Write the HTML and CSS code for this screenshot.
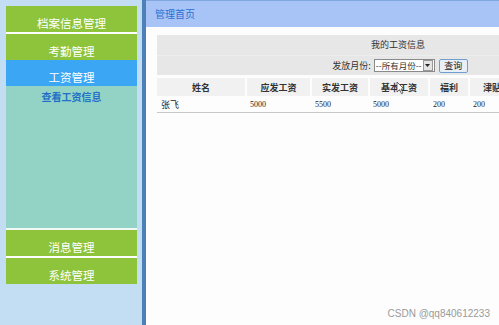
FILE: index.html
```html
<!DOCTYPE html>
<html lang="zh-CN">
<head>
  <meta charset="UTF-8" />
  <title>工资管理</title>
  <link rel="stylesheet" href="styles.css">
</head>
<body>
  <div class="page">
    <!-- Left menu -->
    <div class="sidebar">
      <div class="menu-item sep">档案信息管理</div>
      <div class="menu-item">考勤管理</div>
      <div class="menu-item active">工资管理</div>
      <div class="submenu">
        <a class="sub-link">查看工资信息</a>
      </div>
      <div class="menu-item sep">消息管理</div>
      <div class="menu-item">系统管理</div>
    </div>
    <!-- Main area -->
    <div class="main">
      <div class="main-header">管理首页</div>
      <div class="main-body">
        <div class="panel">
          <div class="panel-title">我的工资信息</div>
          <div class="panel-filter">
            <span class="filter-label">发放月份:</span>
            <span class="select">
              <span class="select-text">--所有月份--</span>
              <span class="select-arrow">
                <svg width="5" height="3" viewBox="0 0 5 3"><path d="M0 0h5L2.5 3z" fill="#222"/></svg>
              </span>
            </span>
            <button class="btn">查询</button>
          </div>
          <table class="grid">
            <tr>
              <th class="c1">姓名</th>
              <th class="c2">应发工资</th>
              <th class="c3">实发工资</th>
              <th class="c4">基本工资</th>
              <th class="c5">福利</th>
              <th class="c6">津贴</th>
              <th class="c7">扣款</th>
              <th class="c8">发放月份</th>
            </tr>
            <tr>
              <td class="name">张飞</td>
              <td>5000</td>
              <td>5500</td>
              <td>5000</td>
              <td>200</td>
              <td>200</td>
              <td>0</td>
              <td>2023-01</td>
            </tr>
          </table>
        </div>
      </div>
    </div>
  </div>
  <!-- mouse pointer -->
  <svg class="cursor" width="9" height="14" viewBox="0 0 9 14">
    <path d="M1 1v10l2.5-2.3 2 4 1.5-.7-2-4H8z" fill="#fff" stroke="#444" stroke-width="0.8"/>
  </svg>
  <div class="watermark">CSDN @qq840612233</div>
</body>
</html>
```

FILE: styles.css
```css
/* Global */
body {
  margin: 0;
  font-family: "Noto Sans CJK SC", "Noto Sans", sans-serif;
  overflow: hidden;
}
.page {
  display: flex;
  height: 325px;
  overflow: hidden;
}
/* Sidebar */
.sidebar {
  flex: 0 0 131px;
  padding: 6px 5px 0 6px;
  background-color: #c3ddf3;
  border-right: 4px solid #4d7fb9;
}
.menu-item {
  height: 26px;
  box-sizing: border-box;
  padding-top: 8px;
  line-height: 18px;
  background-color: #8dc43b;
  color: #fff;
  font-size: 11.5px;
  text-align: center;
  white-space: nowrap;
  overflow: hidden;
}
.menu-item.sep {
  border-bottom: 2px solid #fff;
  height: 28px;
}
.menu-item.active {
  background-color: #3ba6f4;
}
.submenu {
  height: 144px;
  background-color: #93d3c6;
  border-bottom: 2px solid #f2f8f6;
  text-align: center;
  padding-top: 4px;
  box-sizing: border-box;
  font-size: 10px;
  line-height: 14px;
}
.sub-link {
  font-weight: bold;
  color: #1f70c6;
  white-space: nowrap;
}
/* Main */
.main {
  flex: 1;
  min-width: 0;
  overflow: hidden;
  background-color: #fdfdfd;
}
.main-header {
  height: 27px;
  box-sizing: border-box;
  border-top: 1px solid #7fa6de;
  background-color: #a8c4f7;
  padding-left: 9px;
  line-height: 26px;
  font-size: 10px;
  color: #2e6fcf;
}
.main-body {
  padding: 8px 0 0 11px;
}
.panel {
  width: 482px;
}
.panel-title {
  height: 20px;
  line-height: 20px;
  background-color: #e7e7e7;
  text-align: center;
  font-size: 9px;
  color: #333;
}
.panel-filter {
  height: 19px;
  background-color: #e7e7e7;
  border-top: 1px solid #eeeeee;
  display: flex;
  align-items: center;
  justify-content: center;
  padding-left: 4px;
  font-size: 9px;
  color: #333;
}
.filter-label {
  margin-right: 3px;
}
.select {
  display: flex;
  align-items: center;
  width: 61px;
  height: 13px;
  box-sizing: border-box;
  border: 1px solid #8a8a8a;
  background-color: #fff;
  font-size: 8.5px;
}
.select-text {
  flex: 1;
  padding-left: 1px;
  line-height: 11px;
  white-space: nowrap;
}
.select-arrow {
  width: 8px;
  height: 9px;
  margin-right: 1px;
  border: 1px solid #999;
  background-color: #e4e4e4;
  display: flex;
  align-items: center;
  justify-content: center;
}
.btn {
  margin-left: 4px;
  width: 29px;
  height: 14px;
  padding: 0;
  border: 1px solid #6f9fd2;
  border-radius: 2px;
  background-color: #e9eff7;
  font-family: inherit;
  font-size: 9px;
  line-height: 12px;
  color: #222;
}
/* Data grid */
.grid {
  width: 482px;
  margin-top: 3px;
  border-collapse: collapse;
  table-layout: fixed;
  border-bottom: 1px solid #c8c8c8;
}
.grid th {
  height: 18px;
  padding: 0;
  background-color: #f1f1f1;
  border-left: 2px solid #fdfdfd;
  font-size: 9px;
  font-weight: bold;
  color: #333;
  white-space: nowrap;
  overflow: hidden;
}
.grid th.c1 { width: 88px; border-left: none; }
.grid th.c2 { width: 63px; }
.grid th.c3 { width: 56px; }
.grid th.c4 { width: 58px; }
.grid th.c5 { width: 38px; }
.grid th.c6 { width: 44px; }
.grid th.c7 { width: 60px; }
.grid td {
  height: 16px;
  padding: 0 0 0 4px;
  font-family: "Liberation Serif", serif;
  font-size: 8px;
  color: #222;
  white-space: nowrap;
}
.grid td.name {
  font-family: "Noto Sans CJK SC", sans-serif;
  font-size: 9px;
}
/* Overlays */
.cursor {
  position: absolute;
  left: 396px;
  top: 81px;
}
.watermark {
  position: absolute;
  right: 9px;
  bottom: 6px;
  font-family: "Liberation Sans", sans-serif;
  font-size: 10px;
  color: #9a9a9a;
}
```
